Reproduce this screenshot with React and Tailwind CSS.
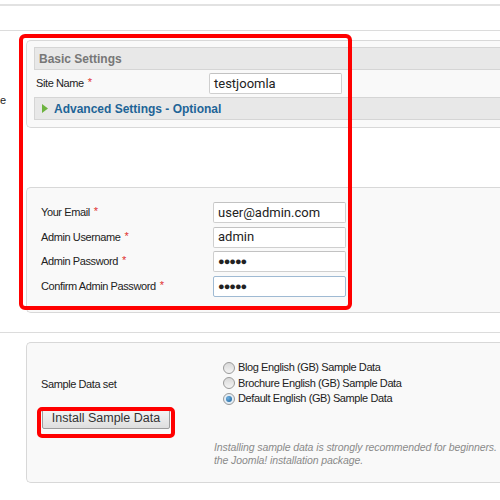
import React from "react";

const Star = () => <span className="text-[#e03030] ml-[4px] relative top-[-1px]">*</span>;

const Input = ({ children, focus, w = "w-[133px]" }) => (
  <div
    className={`${w} h-[21px] bg-white border rounded-[2px] flex items-center pl-[4px] text-[13px] text-[#222] ${
      focus ? "border-[#9fbad3]" : "border-[#cfcfcf] border-t-[#c2c2c2]"
    }`}
    style={{ fontFamily: "Roboto, Arial, sans-serif" }}
  >
    {children}
  </div>
);

const Dots = () => <span className="text-[11px] tracking-[-1px] leading-none">●●●●●</span>;

const Row = ({ label, children }) => (
  <div className="flex items-center h-[24.7px]">
    <div className="w-[186px] pl-[14px] text-[11px] tracking-[-0.4px] text-[#222]">
      {label}
      <Star />
    </div>
    {children}
  </div>
);

const Radio = ({ checked, label }) => (
  <div className="flex items-center h-[15.5px]">
    <span
      className={`w-[12px] h-[12px] rounded-full border border-[#9a9a9a] flex items-center justify-center ${
        checked ? "bg-[#e4eef6]" : "bg-[linear-gradient(#d9d9d9,#f4f4f4)]"
      }`}
    >
      {checked && <span className="w-[6px] h-[6px] rounded-full bg-[radial-gradient(circle_at_35%_35%,#6fb0e0,#1a5f98)]" />}
    </span>
    <span className="ml-[3px] text-[11px] tracking-[-0.4px] text-[#222]">{label}</span>
  </div>
);

export default function App() {
  return (
    <div
      className="w-[500px] h-[500px] bg-white relative overflow-hidden"
      style={{ fontFamily: "Tahoma, 'Liberation Sans', Arial, sans-serif" }}
    >
      <div className="pt-[4px]">
        <div className="border-t-2 border-[#e2e2e2]" />
        <div className="h-[24px]" />
        <div className="border-t border-[#dcdcdc]" />
      </div>

      {/* Section 1 */}
      <div className="flex pt-[9px]">
        <div className="w-[26px] shrink-0 relative">
          <div className="pt-[55px] text-[11px] text-[#222] leading-none">e</div>
        </div>
        <div className="flex-1 min-w-[480px] border border-r-0 border-[#d8d8d8] rounded-l-[5px] bg-[#f9f9f9] pt-[6px] pl-[7px] pb-[7px]">
          <div className="h-[23px] bg-[#e8e8e8] border border-r-0 border-[#d5d5d5] flex items-center pl-[4px] text-[12px] font-bold text-[#777]">
            Basic Settings
          </div>
          <div className="h-[27px] flex items-center">
            <div className="w-[175px] pl-[2px] text-[11px] tracking-[-0.4px] text-[#222]">
              Site Name
              <Star />
            </div>
            <Input>testjoomla</Input>
          </div>
          <div className="h-[23px] bg-[#e8e8e8] border border-r-0 border-[#d5d5d5] flex items-center pl-[7px]">
            <svg width="6" height="9" viewBox="0 0 6 9" className="mr-[6px]">
              <polygon points="0,0 6,4.5 0,9" fill="#6db33f" />
            </svg>
            <span className="text-[12px] font-bold text-[#1d6497]">Advanced Settings - Optional</span>
          </div>
        </div>
      </div>

      {/* Section 2 */}
      <div className="flex mt-[59px]">
        <div className="w-[26px] shrink-0" />
        <div className="flex-1 min-w-[480px] border border-r-0 border-[#d8d8d8] rounded-l-[5px] bg-[#f9f9f9] pt-[12px] pb-[13px]">
          <Row label="Your Email">
            <Input>user@admin.com</Input>
          </Row>
          <Row label="Admin Username">
            <Input>admin</Input>
          </Row>
          <Row label="Admin Password">
            <Input>
              <Dots />
            </Input>
          </Row>
          <Row label="Confirm Admin Password">
            <Input focus>
              <Dots />
            </Input>
          </Row>
        </div>
      </div>

      <div className="mt-[19px] border-t border-[#dcdcdc]" />

      {/* Section 3 */}
      <div className="flex mt-[9px]">
        <div className="w-[26px] shrink-0" />
        <div className="flex-1 min-w-[480px] h-[141px] border border-r-0 border-[#d8d8d8] rounded-l-[5px] bg-[#f9f9f9] flex">
          <div className="w-[187px] shrink-0 pl-[14px]">
            <div className="pt-[33px] text-[11px] tracking-[-0.4px] text-[#222]">Sample Data set</div>
            <div className="mt-[16px] ml-[1px] w-[128px] h-[21px] border border-[#9c9c9c] rounded-[2px] bg-[linear-gradient(#f6f6f6,#dedede)] flex items-center justify-center text-[12.5px] text-[#333]">
              Install Sample Data
            </div>
          </div>
          <div className="flex-1 whitespace-nowrap overflow-hidden">
            <div className="pt-[17px] pl-[9px]">
              <Radio label="Blog English (GB) Sample Data" />
              <Radio label="Brochure English (GB) Sample Data" />
              <Radio checked label="Default English (GB) Sample Data" />
            </div>
            <div className="mt-[35px] text-[10.5px] tracking-[-0.1px] italic text-[#8a8a8a] leading-[13px]">
              <div>Installing sample data is strongly recommended for beginners. T</div>
              <div>the Joomla! installation package.</div>
            </div>
          </div>
        </div>
      </div>

      {/* Red annotation overlays */}
      <div className="absolute left-[19px] top-[34px] w-[333px] h-[276px] border-[4px] border-[#ff0000] rounded-[6px] pointer-events-none" />
      <div className="absolute left-[37px] top-[407px] w-[138px] h-[31px] border-[4px] border-[#ff0000] rounded-[5px] pointer-events-none" />
    </div>
  );
}
